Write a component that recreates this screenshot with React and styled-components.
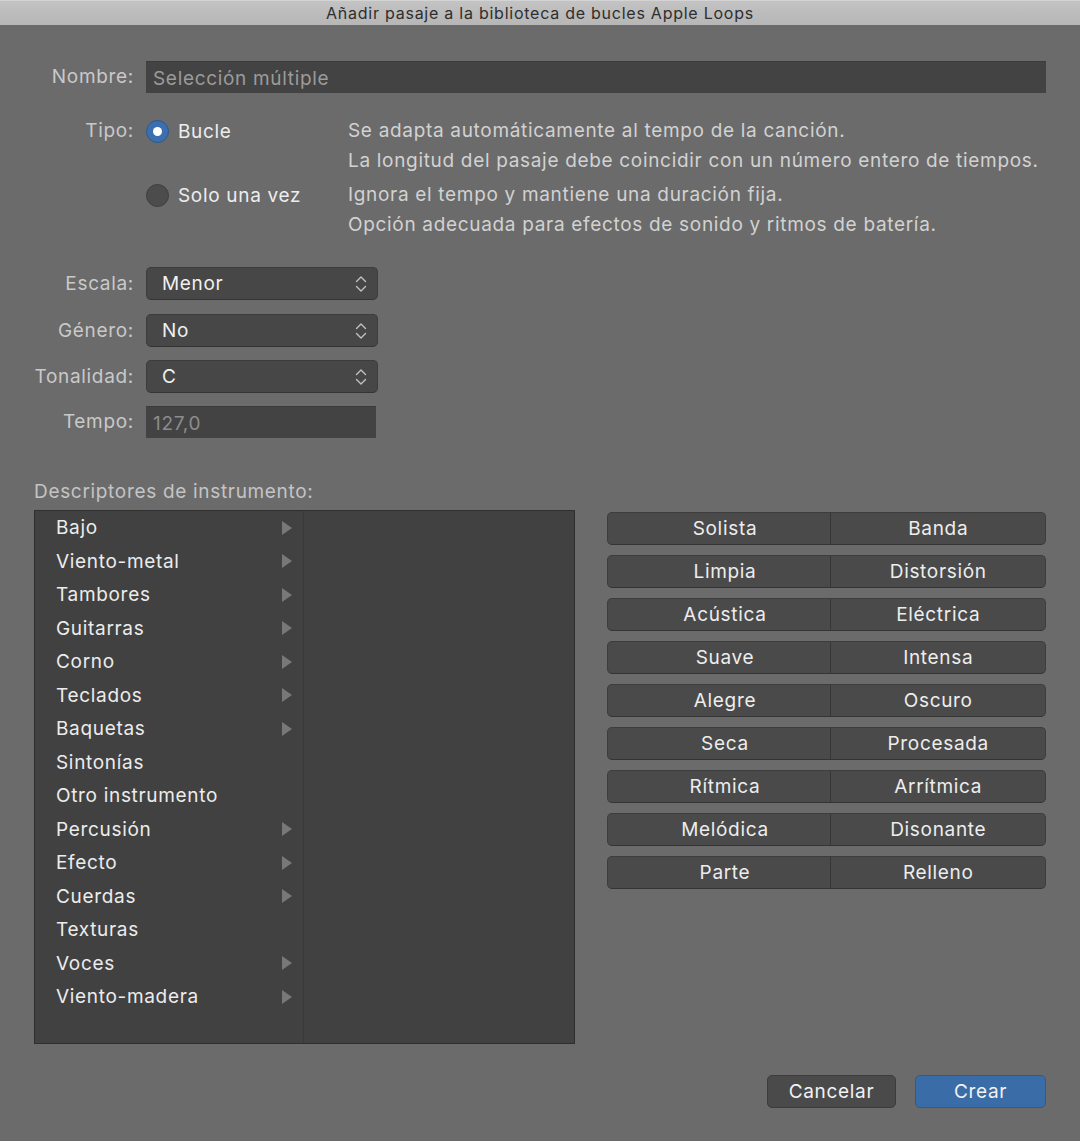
import React from 'react';
import styled, { createGlobalStyle } from 'styled-components';

const GlobalStyle = createGlobalStyle`
  html, body {
    margin: 0;
    padding: 0;
    background: #6b6b6b;
  }
  body {
    font-family: Inter, "Noto Sans", "Liberation Sans", sans-serif;
    font-size: 19px;
    letter-spacing: 0.68px;
    -webkit-font-smoothing: antialiased;
  }
`;

const Window = styled.div`
  width: 1080px;
  min-height: 1141px;
  background: #6b6b6b;
  display: flex;
  flex-direction: column;
`;

const TitleBar = styled.div`
  height: 25px;
  flex: none;
  background: linear-gradient(#c3c3c3, #b6b6b6);
  border-top: 1px solid #d4d4d4;
  box-sizing: border-box;
  display: flex;
  align-items: center;
  justify-content: center;
  color: #2e2e2e;
  font-size: 16px;
  letter-spacing: 0.75px;
`;

const Body = styled.div`
  padding: 36px 34px 33px 34px;
  display: flex;
  flex-direction: column;
`;

const Row = styled.div`
  display: grid;
  grid-template-columns: 100px ${p => p.$cols || '1fr'};
  column-gap: 12px;
  align-items: ${p => p.$align || 'center'};
  margin-top: ${p => p.$mt || 0}px;
`;

const Label = styled.div`
  text-align: right;
  color: #c9c9c9;
  line-height: 30px;
  white-space: nowrap;
`;

const TextField = styled.div`
  height: 32px;
  width: ${p => p.$w || 'auto'};
  box-sizing: border-box;
  background: #434343;
  border-top: 1px solid #3a3a3a;
  color: ${p => p.$dim || '#9b9b9b'};
  display: flex;
  align-items: center;
  padding: 1px 0 0 7px;
`;

const RadioOption = styled.div`
  display: flex;
  align-items: center;
  gap: 9px;
  height: 30px;
  color: #ededed;
  white-space: nowrap;
`;

const RadioDot = styled.span`
  width: 23px;
  height: 23px;
  box-sizing: border-box;
  border-radius: 50%;
  flex: none;
  display: flex;
  align-items: center;
  justify-content: center;
  background: ${p => (p.$on ? '#3b6fb0' : '#4c4c4c')};
  border: 1px solid ${p => (p.$on ? '#2d5890' : '#3e3e3e')};
  &::after {
    content: '';
    width: 9px;
    height: 9px;
    border-radius: 50%;
    background: #fff;
    display: ${p => (p.$on ? 'block' : 'none')};
  }
`;

const Description = styled.div`
  color: #d2d2d2;
  line-height: 30px;
  white-space: nowrap;
`;

const Select = styled.div`
  width: 232px;
  height: 33px;
  box-sizing: border-box;
  background: #474747;
  border: 1px solid #3c3c3c;
  border-bottom-color: #353535;
  border-radius: 5px;
  display: flex;
  align-items: center;
  justify-content: space-between;
  padding: 0 9px 0 15px;
  color: #f0f0f0;
`;

const SectionLabel = styled.div`
  margin-top: 43px;
  color: #c4c4c4;
  line-height: 22px;
`;

const Lower = styled.div`
  margin-top: 7px;
  display: flex;
  gap: 32px;
  align-items: flex-start;
`;

const ListBox = styled.div`
  width: 542px;
  height: 534px;
  box-sizing: border-box;
  background: #414141;
  border: 1px solid #2f2f2f;
  display: grid;
  grid-template-columns: 269px 1fr;
`;

const Column = styled.div`
  border-right: ${p => (p.$divider ? '1px solid #393939' : 'none')};
  display: flex;
  flex-direction: column;
`;

const ListItem = styled.div`
  height: 33.5px;
  display: flex;
  align-items: center;
  justify-content: space-between;
  padding: 0 11px 0 21px;
  color: #ececec;
`;

const Arrow = styled.span`
  width: 0;
  height: 0;
  border-top: 7px solid transparent;
  border-bottom: 7px solid transparent;
  border-left: 10px solid #787878;
`;

const Segments = styled.div`
  width: 439px;
  padding-top: 2px;
  display: flex;
  flex-direction: column;
  gap: 10px;
`;

const SegmentRow = styled.div`
  height: 33px;
  box-sizing: border-box;
  display: grid;
  grid-template-columns: 223px 1fr;
  background: #4a4a4a;
  border: 1px solid #3d3d3d;
  border-bottom-color: #343434;
  border-radius: 5px;
  overflow: hidden;
`;

const Segment = styled.div`
  display: flex;
  align-items: center;
  justify-content: center;
  color: #ededed;
  padding-left: ${p => (p.$first ? '11px' : '0')};
  border-right: ${p => (p.$first ? '1px solid #363636' : 'none')};
`;

const Footer = styled.div`
  margin-top: 31px;
  display: flex;
  justify-content: flex-end;
  gap: 19px;
`;

const Button = styled.div`
  width: ${p => p.$w}px;
  height: 33px;
  box-sizing: border-box;
  border-radius: 5px;
  display: flex;
  align-items: center;
  justify-content: center;
  color: #f2f2f2;
  background: ${p => (p.$primary ? '#3a6ca8' : '#4a4a4a')};
  border: 1px solid ${p => (p.$primary ? '#2e5a8f' : '#3c3c3c')};
`;

const Updown = () => (
  <svg width="14" height="20" viewBox="0 0 14 20" fill="none" stroke="#c2c2c2" strokeWidth="1.4" strokeLinecap="round" strokeLinejoin="round">
    <polyline points="2.5,7.5 7,3 11.5,7.5" />
    <polyline points="2.5,12.5 7,17 11.5,12.5" />
  </svg>
);

const instruments = [
  ['Bajo', true], ['Viento-metal', true], ['Tambores', true], ['Guitarras', true],
  ['Corno', true], ['Teclados', true], ['Baquetas', true], ['Sintonías', false],
  ['Otro instrumento', false], ['Percusión', true], ['Efecto', true], ['Cuerdas', true],
  ['Texturas', false], ['Voces', true], ['Viento-madera', true],
];

const pairs = [
  ['Solista', 'Banda'], ['Limpia', 'Distorsión'], ['Acústica', 'Eléctrica'],
  ['Suave', 'Intensa'], ['Alegre', 'Oscuro'], ['Seca', 'Procesada'],
  ['Rítmica', 'Arrítmica'], ['Melódica', 'Disonante'], ['Parte', 'Relleno'],
];

const selects = [
  ['Escala:', 'Menor', 27],
  ['Género:', 'No', 14],
  ['Tonalidad:', 'C', 13],
];

export default function App() {
  return (
    <Window>
      <GlobalStyle />
      <TitleBar>Añadir pasaje a la biblioteca de bucles Apple Loops</TitleBar>
      <Body>
        <Row>
          <Label>Nombre:</Label>
          <TextField>Selección múltiple</TextField>
        </Row>

        <Row $cols="190px 1fr" $align="start" $mt={23}>
          <Label>Tipo:</Label>
          <RadioOption><RadioDot $on />Bucle</RadioOption>
          <Description>
            Se adapta automáticamente al tempo de la canción.<br />
            La longitud del pasaje debe coincidir con un número entero de tiempos.
          </Description>
        </Row>
        <Row $cols="190px 1fr" $align="start" $mt={4}>
          <div />
          <RadioOption><RadioDot />Solo una vez</RadioOption>
          <Description>
            Ignora el tempo y mantiene una duración fija.<br />
            Opción adecuada para efectos de sonido y ritmos de batería.
          </Description>
        </Row>

        {selects.map(([label, value, mt]) => (
          <Row key={label} $mt={mt}>
            <Label>{label}</Label>
            <Select>{value}<Updown /></Select>
          </Row>
        ))}
        <Row $mt={13}>
          <Label>Tempo:</Label>
          <TextField $w="230px" $dim="#8c8c8c">127,0</TextField>
        </Row>

        <SectionLabel>Descriptores de instrumento:</SectionLabel>
        <Lower>
          <ListBox>
            <Column $divider>
              {instruments.map(([name, sub]) => (
                <ListItem key={name}>{name}{sub && <Arrow />}</ListItem>
              ))}
            </Column>
            <Column />
          </ListBox>
          <Segments>
            {pairs.map(([a, b]) => (
              <SegmentRow key={a}>
                <Segment $first>{a}</Segment>
                <Segment>{b}</Segment>
              </SegmentRow>
            ))}
          </Segments>
        </Lower>

        <Footer>
          <Button $w={129}>Cancelar</Button>
          <Button $w={131} $primary>Crear</Button>
        </Footer>
      </Body>
    </Window>
  );
}
